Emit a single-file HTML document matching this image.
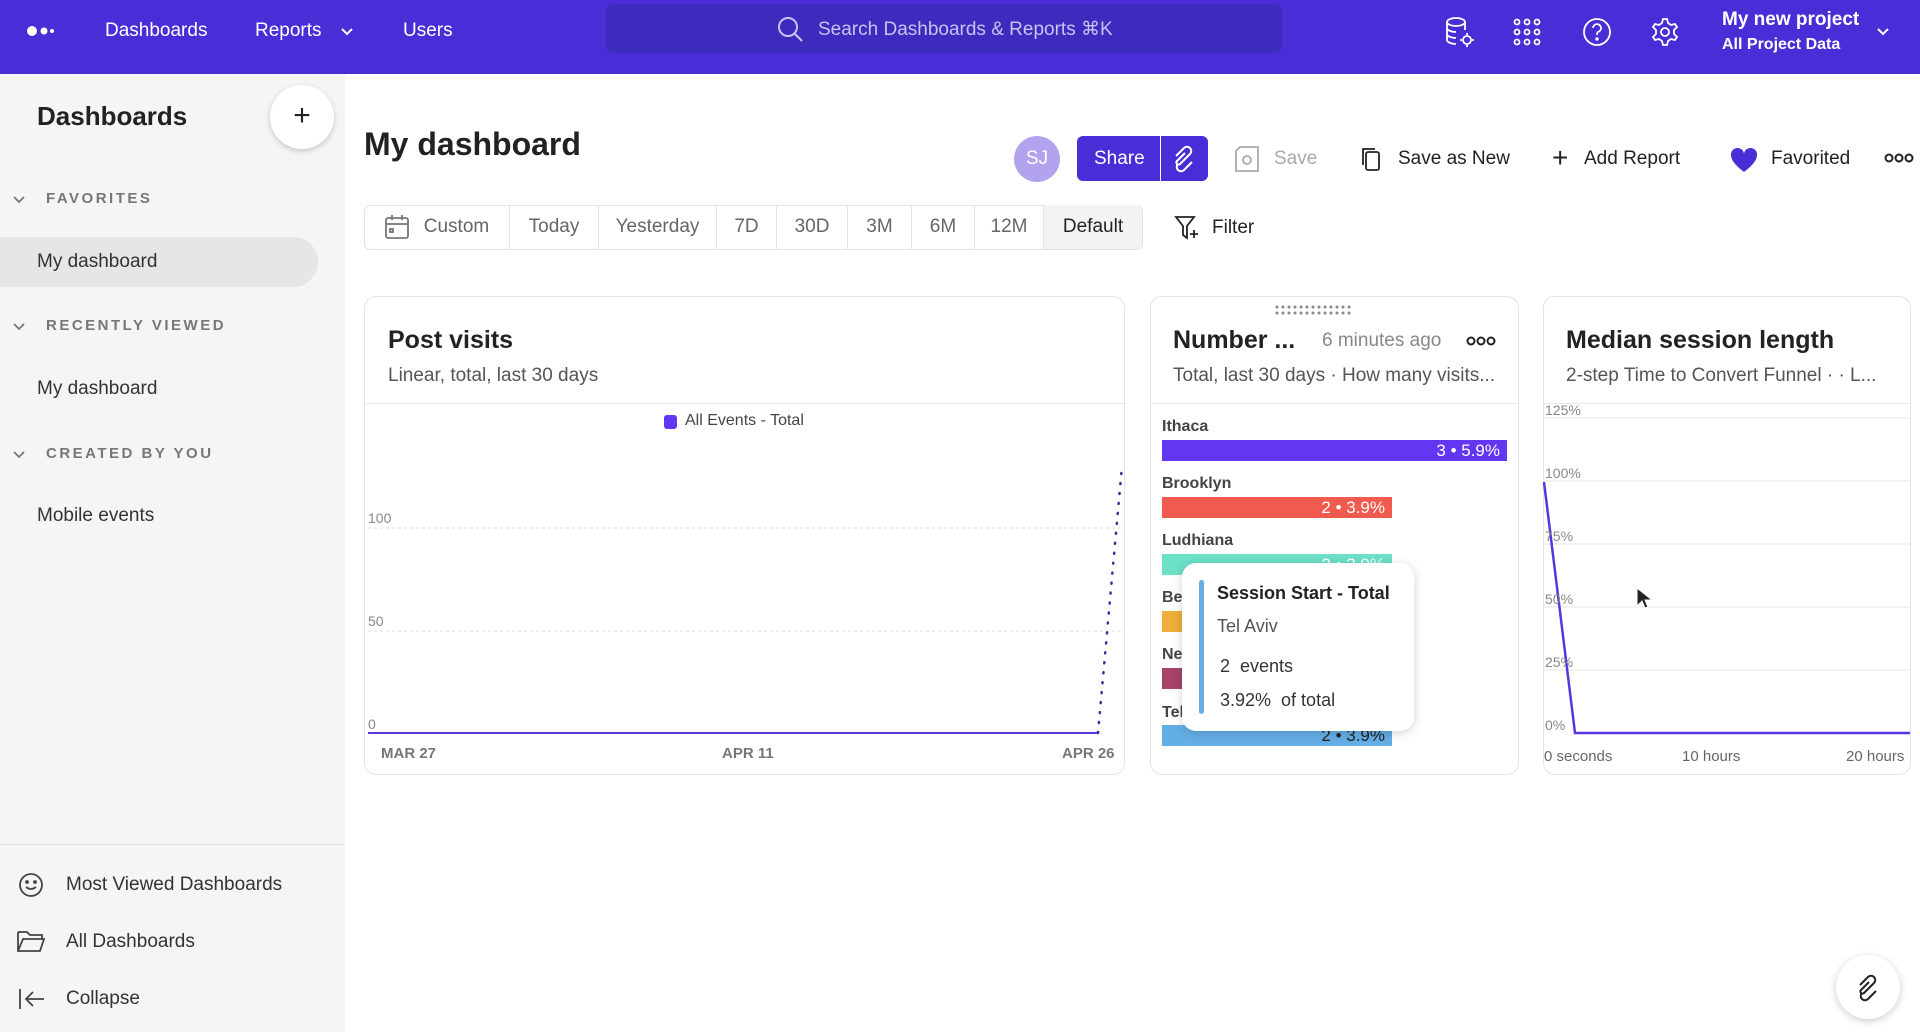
<!DOCTYPE html>
<html><head><meta charset="utf-8"><style>
*{box-sizing:border-box;margin:0;padding:0}
body{width:1920px;height:1032px;overflow:hidden;background:#fff;font-family:"Liberation Sans",sans-serif;color:#1f1f1f;position:relative}
.a{position:absolute;white-space:nowrap}
.hdr{left:0;top:0;width:1920px;height:74px;background:#4a2dd6}
.nav{color:#fff;font-size:19px;top:20px}
.side{left:0;top:74px;width:345px;height:958px;background:#f5f5f5}
.sec{font-size:15px;letter-spacing:2.5px;color:#777;font-weight:bold}
.si{font-size:19px;color:#333}
.card{border:1px solid #e4e4e4;border-radius:12px;background:#fff}
.ct{font-size:25px;font-weight:bold;color:#222}
.cs{font-size:19px;color:#555}
.seg{top:205px;height:44px;border-right:1px solid #e4e4e4;font-size:19px;color:#666;display:flex;align-items:center;justify-content:center}
.tb{font-size:19px;color:#222;top:148px}
.bl{font-size:16px;font-weight:bold;color:#444}
.bar{height:21px;color:#fff;font-size:17px;text-align:right;padding-right:7px;line-height:21px}
.yl{font-size:14px;color:#888}
.xl{font-size:15px;color:#777;font-weight:bold}
</style></head><body>
<div class="a hdr"></div>
<svg class="a" style="left:26px;top:24px" width="30" height="14"><circle cx="6" cy="7" r="5" fill="#fff"/><circle cx="18" cy="7" r="3.5" fill="#fff"/><circle cx="26" cy="7" r="2" fill="#fff"/></svg>
<div class="a nav" style="left:105px">Dashboards</div>
<div class="a nav" style="left:255px">Reports</div>
<svg class="a" style="left:341px;top:28px" width="12" height="8" fill="none" stroke="#fff" stroke-width="2"><path d="M1 1l5 5 5-5"/></svg>
<div class="a nav" style="left:403px">Users</div>
<div class="a" style="left:606px;top:4px;width:676px;height:49px;background:#3c2bbd;border-radius:8px"></div>
<svg class="a" style="left:776px;top:15px" width="28" height="28" fill="none" stroke="#c9c2f2" stroke-width="2"><circle cx="12" cy="12" r="9"/><path d="M19 19l7 7"/></svg>
<div class="a" style="left:818px;top:18px;color:#c9c2f2;font-size:19px">Search Dashboards &amp; Reports &#8984;K</div>
<svg class="a" style="left:1444px;top:16px" width="32" height="34" fill="none" stroke="#fff" stroke-width="1.8"><ellipse cx="12" cy="6" rx="9" ry="4"/><path d="M3 6v18c0 2 4 4 9 4M21 6v8M3 12c0 2 4 4 9 4M3 18c0 2 4 4 9 4"/><circle cx="23" cy="24" r="4"/><path d="M23 17v2M23 29v2M16 24h2M28 24h2"/></svg>
<svg class="a" style="left:1513px;top:18px" width="28" height="28" fill="none" stroke="#fff" stroke-width="1.8"><circle cx="4" cy="4" r="2.5"/><circle cx="14" cy="4" r="2.5"/><circle cx="24" cy="4" r="2.5"/><circle cx="4" cy="14" r="2.5"/><circle cx="14" cy="14" r="2.5"/><circle cx="24" cy="14" r="2.5"/><circle cx="4" cy="24" r="2.5"/><circle cx="14" cy="24" r="2.5"/><circle cx="24" cy="24" r="2.5"/></svg>
<svg class="a" style="left:1582px;top:17px" width="30" height="30" fill="none" stroke="#fff" stroke-width="1.8"><circle cx="15" cy="15" r="13"/><path d="M11 11a4 4 0 1 1 5 4c-1 .5-1 1.5-1 3"/><circle cx="15" cy="22" r=".8" fill="#fff"/></svg>
<svg class="a" style="left:1650px;top:17px" width="30" height="30" fill="none" stroke="#fff" stroke-width="1.8"><circle cx="15" cy="15" r="4"/><path d="M13 2h4l1 4 3 2 4-1 2 3-3 3v4l3 3-2 3-4-1-3 2-1 4h-4l-1-4-3-2-4 1-2-3 3-3v-4l-3-3 2-3 4 1 3-2z"/></svg>
<div class="a" style="left:1722px;top:9px;color:#fff;font-size:19px;font-weight:bold">My new project</div>
<div class="a" style="left:1722px;top:36px;color:#fff;font-size:16px;font-weight:bold">All Project Data</div>
<svg class="a" style="left:1877px;top:28px" width="12" height="8" fill="none" stroke="#fff" stroke-width="2"><path d="M1 1l5 5 5-5"/></svg>

<div class="a side"></div>
<div class="a" style="left:37px;top:101px;font-size:26px;font-weight:bold;color:#222">Dashboards</div>
<div class="a" style="left:270px;top:85px;width:64px;height:64px;border-radius:50%;background:#fff;box-shadow:0 2px 6px rgba(0,0,0,.2);font-size:30px;text-align:center;line-height:62px;color:#222">+</div>
<svg class="a" style="left:13px;top:196px" width="12" height="8" fill="none" stroke="#777" stroke-width="1.8"><path d="M1 1l5 5 5-5"/></svg><div class="a sec" style="left:46px;top:190px">FAVORITES</div>
<div class="a" style="left:0;top:237px;width:318px;height:50px;background:#e6e6e6;border-radius:0 25px 25px 0"></div>
<div class="a si" style="left:37px;top:251px">My dashboard</div>
<svg class="a" style="left:13px;top:323px" width="12" height="8" fill="none" stroke="#777" stroke-width="1.8"><path d="M1 1l5 5 5-5"/></svg><div class="a sec" style="left:46px;top:317px">RECENTLY VIEWED</div>
<div class="a si" style="left:37px;top:378px">My dashboard</div>
<svg class="a" style="left:13px;top:451px" width="12" height="8" fill="none" stroke="#777" stroke-width="1.8"><path d="M1 1l5 5 5-5"/></svg><div class="a sec" style="left:46px;top:445px">CREATED BY YOU</div>
<div class="a si" style="left:37px;top:505px">Mobile events</div>
<div class="a" style="left:0;top:844px;width:345px;height:1px;background:#e2e2e2"></div>
<svg class="a" style="left:18px;top:872px" width="26" height="26" fill="none" stroke="#444" stroke-width="1.8"><circle cx="13" cy="13" r="11"/><circle cx="9" cy="10" r="1" fill="#444"/><circle cx="17" cy="10" r="1" fill="#444"/><path d="M8 15q5 4 10 0"/></svg>
<div class="a si" style="left:66px;top:874px">Most Viewed Dashboards</div>
<svg class="a" style="left:16px;top:928px" width="30" height="26" fill="none" stroke="#444" stroke-width="1.8"><path d="M2 4h9l3 3h12v4M2 4v19h22l4-12H7L2 23"/></svg>
<div class="a si" style="left:66px;top:931px">All Dashboards</div>
<svg class="a" style="left:18px;top:987px" width="28" height="24" fill="none" stroke="#444" stroke-width="1.8"><path d="M2 2v20M26 12H8M15 5l-7 7 7 7"/></svg>
<div class="a si" style="left:66px;top:988px">Collapse</div>

<div class="a" style="left:364px;top:126px;font-size:32px;font-weight:bold;color:#222">My dashboard</div>
<div class="a" style="left:1014px;top:136px;width:46px;height:46px;border-radius:50%;background:#b3a3ef;color:#fff;font-size:19px;text-align:center;line-height:46px">SJ</div>
<div class="a" style="left:1077px;top:136px;width:131px;height:45px;border-radius:6px;background:#4a2dd6"></div>
<div class="a" style="left:1160px;top:136px;width:1px;height:45px;background:#fff"></div>
<div class="a" style="left:1094px;top:148px;color:#fff;font-size:19px">Share</div>
<svg class="a" style="left:1170px;top:144px" width="28" height="30" fill="none" stroke="#fff" stroke-width="2"><path d="M6 12l8-8a4 4 0 0 1 6 6l-10 10a2 2 0 0 1-3-3l8-8M22 18l-8 8a4 4 0 0 1-6-6"/></svg>
<svg class="a" style="left:1234px;top:145px" width="26" height="28" fill="none" stroke="#aaa" stroke-width="1.8"><path d="M2 6l4-4h18v24H2z"/><circle cx="13" cy="15" r="4"/></svg>
<div class="a tb" style="left:1274px;color:#aaa">Save</div>
<svg class="a" style="left:1360px;top:146px" width="22" height="26" fill="none" stroke="#222" stroke-width="1.8"><rect x="6" y="6" width="13" height="18" rx="2"/><path d="M3 19V3h12"/></svg>
<div class="a tb" style="left:1398px">Save as New</div>
<div class="a" style="left:1552px;top:142px;font-size:28px;color:#222">+</div>
<div class="a tb" style="left:1584px">Add Report</div>
<svg class="a" style="left:1730px;top:147px" width="28" height="26"><path d="M14 25C5 18 1 13 1 8a6.5 6.5 0 0 1 13-1 6.5 6.5 0 0 1 13 1c0 5-4 10-13 17z" fill="#4a2dd6"/></svg>
<div class="a tb" style="left:1771px">Favorited</div>
<svg class="a" style="left:1884px;top:152px" width="30" height="12" fill="none" stroke="#222" stroke-width="2"><circle cx="5" cy="6" r="3.5"/><circle cx="15" cy="6" r="3.5"/><circle cx="25" cy="6" r="3.5"/></svg>

<div class="a" style="left:364px;top:205px;width:779px;height:45px;border:1px solid #e2e2e2;border-radius:6px"></div>
<div class="a seg" style="left:364px;width:146px"><svg width="26" height="26" fill="none" stroke="#777" stroke-width="1.8" style="margin-right:14px"><rect x="2" y="4" width="22" height="20" rx="2"/><path d="M2 10h22M8 1v5M18 1v5"/><rect x="6" y="15" width="3" height="3"/></svg>Custom</div>
<div class="a seg" style="left:510px;width:89px">Today</div>
<div class="a seg" style="left:599px;width:118px">Yesterday</div>
<div class="a seg" style="left:717px;width:60px">7D</div>
<div class="a seg" style="left:777px;width:71px">30D</div>
<div class="a seg" style="left:848px;width:64px">3M</div>
<div class="a seg" style="left:912px;width:63px">6M</div>
<div class="a seg" style="left:975px;width:69px">12M</div>
<div class="a seg" style="left:1044px;width:98px;background:#f3f3f3;color:#222;border-right:none;border-radius:0 6px 6px 0">Default</div>
<svg class="a" style="left:1174px;top:214px" width="28" height="28" fill="none" stroke="#222" stroke-width="1.8"><path d="M2 3h18l-7 9v12l-4-3v-9z M20 16v8M16 20h8"/></svg>
<div class="a" style="left:1212px;top:217px;font-size:19px;color:#222">Filter</div>

<!-- card1 -->
<div class="a card" style="left:364px;top:296px;width:761px;height:479px"></div>
<div class="a ct" style="left:388px;top:326px">Post visits</div>
<div class="a cs" style="left:388px;top:365px">Linear, total, last 30 days</div>
<div class="a" style="left:365px;top:403px;width:759px;height:1px;background:#e8e8e8"></div>
<div class="a" style="left:664px;top:415px;width:13px;height:14px;border-radius:3px;background:#6336f2"></div>
<div class="a" style="left:685px;top:412px;font-size:16px;color:#444">All Events - Total</div>
<div class="a yl" style="left:368px;top:510px">100</div>
<div class="a yl" style="left:368px;top:613px">50</div>
<div class="a yl" style="left:368px;top:716px">0</div>
<svg class="a" style="left:364px;top:296px" width="761" height="479">
<line x1="4" y1="232" x2="758" y2="232" stroke="#ddd" stroke-dasharray="3 3"/>
<line x1="4" y1="335" x2="758" y2="335" stroke="#ddd" stroke-dasharray="3 3"/>
<line x1="4" y1="437" x2="734" y2="437" stroke="#5a34e0" stroke-width="2"/>
<line x1="734" y1="437" x2="758" y2="170" stroke="#3b2aa0" stroke-width="2.5" stroke-dasharray="1 9" stroke-linecap="round"/>
</svg>
<div class="a xl" style="left:381px;top:745px">MAR 27</div>
<div class="a xl" style="left:722px;top:745px">APR 11</div>
<div class="a xl" style="left:1062px;top:745px">APR 26</div>

<!-- card2 -->
<div class="a card" style="left:1150px;top:296px;width:369px;height:479px"></div>
<svg class="a" style="left:1275px;top:305px" width="80" height="12" fill="#888"><g id="r"><circle cx="2" cy="2" r="1.5"/><circle cx="8" cy="2" r="1.5"/><circle cx="14" cy="2" r="1.5"/><circle cx="20" cy="2" r="1.5"/><circle cx="26" cy="2" r="1.5"/><circle cx="32" cy="2" r="1.5"/><circle cx="38" cy="2" r="1.5"/><circle cx="44" cy="2" r="1.5"/><circle cx="50" cy="2" r="1.5"/><circle cx="56" cy="2" r="1.5"/><circle cx="62" cy="2" r="1.5"/><circle cx="68" cy="2" r="1.5"/><circle cx="74" cy="2" r="1.5"/></g><use href="#r" y="6"/></svg>
<div class="a ct" style="left:1173px;top:326px">Number ...</div>
<div class="a" style="left:1322px;top:330px;font-size:19px;color:#888">6 minutes ago</div>
<svg class="a" style="left:1466px;top:335px" width="30" height="12" fill="none" stroke="#222" stroke-width="2"><circle cx="5" cy="6" r="3.5"/><circle cx="15" cy="6" r="3.5"/><circle cx="25" cy="6" r="3.5"/></svg>
<div class="a cs" style="left:1173px;top:365px">Total, last 30 days · How many visits...</div>
<div class="a" style="left:1151px;top:403px;width:367px;height:1px;background:#e8e8e8"></div>
<div class="a bl" style="left:1162px;top:418px">Ithaca</div>
<div class="a bar" style="left:1162px;top:440px;width:345px;background:#6336f2">3 • 5.9%</div>
<div class="a bl" style="left:1162px;top:475px">Brooklyn</div>
<div class="a bar" style="left:1162px;top:497px;width:230px;background:#f05a4f">2 • 3.9%</div>
<div class="a bl" style="left:1162px;top:532px">Ludhiana</div>
<div class="a bar" style="left:1162px;top:554px;width:230px;background:#6de0c8">2 • 3.9%</div>
<div class="a bl" style="left:1162px;top:589px">Be</div>
<div class="a bar" style="left:1162px;top:611px;width:230px;background:#f0ae3a"></div>
<div class="a bl" style="left:1162px;top:646px">Ne</div>
<div class="a bar" style="left:1162px;top:668px;width:230px;background:#a8436a"></div>
<div class="a bl" style="left:1162px;top:704px">Tel</div>
<div class="a bar" style="left:1162px;top:725px;width:230px;background:#64aee6;color:#222">2 • 3.9%</div>
<div class="a" style="left:1182px;top:563px;width:232px;height:168px;background:#fff;border-radius:14px;box-shadow:0 2px 10px rgba(0,0,0,.18)"></div>
<div class="a" style="left:1199px;top:580px;width:5px;height:134px;border-radius:3px;background:#64aee6"></div>
<div class="a" style="left:1217px;top:583px;font-size:18px;font-weight:bold;color:#222">Session Start - Total</div>
<div class="a" style="left:1217px;top:616px;font-size:18px;color:#555">Tel Aviv</div>
<div class="a" style="left:1220px;top:656px;font-size:18px;color:#333">2&nbsp; events</div>
<div class="a" style="left:1220px;top:690px;font-size:18px;color:#333">3.92%&nbsp; of total</div>

<!-- card3 -->
<div class="a card" style="left:1543px;top:296px;width:368px;height:479px"></div>
<div class="a ct" style="left:1566px;top:326px">Median session length</div>
<div class="a cs" style="left:1566px;top:365px">2-step Time to Convert Funnel · · L...</div>
<div class="a" style="left:1544px;top:403px;width:366px;height:1px;background:#e8e8e8"></div>
<svg class="a" style="left:1543px;top:296px" width="368" height="479">
<g stroke="#e6e6e6"><line x1="1" y1="122" x2="367" y2="122"/><line x1="1" y1="185" x2="367" y2="185"/><line x1="1" y1="248" x2="367" y2="248"/><line x1="1" y1="311" x2="367" y2="311"/><line x1="1" y1="374" x2="367" y2="374"/></g>
<polyline points="1,186 32,437 367,437" fill="none" stroke="#5a34e0" stroke-width="2.5"/>
</svg>
<div class="a yl" style="left:1545px;top:402px">125%</div>
<div class="a yl" style="left:1545px;top:465px">100%</div>
<div class="a yl" style="left:1545px;top:528px">75%</div>
<div class="a yl" style="left:1545px;top:591px">50%</div>
<div class="a yl" style="left:1545px;top:654px">25%</div>
<div class="a yl" style="left:1545px;top:717px">0%</div>
<div class="a" style="left:1544px;top:748px;font-size:15px;color:#666">0 seconds</div>
<div class="a" style="left:1682px;top:748px;font-size:15px;color:#666">10 hours</div>
<div class="a" style="left:1846px;top:748px;font-size:15px;color:#666">20 hours</div>
<svg class="a" style="left:1636px;top:587px" width="16" height="24"><path d="M1 1v18l5-5 3 7 3-1-3-7h7z" fill="#222" stroke="#fff"/></svg>

<div class="a" style="left:1836px;top:955px;width:64px;height:64px;border-radius:50%;background:#fff;box-shadow:0 2px 8px rgba(0,0,0,.2)"></div>
<svg class="a" style="left:1854px;top:973px" width="28" height="30" fill="none" stroke="#222" stroke-width="2"><path d="M6 12l8-8a4 4 0 0 1 6 6l-10 10a2 2 0 0 1-3-3l8-8M22 18l-8 8a4 4 0 0 1-6-6"/></svg>
</body></html>
